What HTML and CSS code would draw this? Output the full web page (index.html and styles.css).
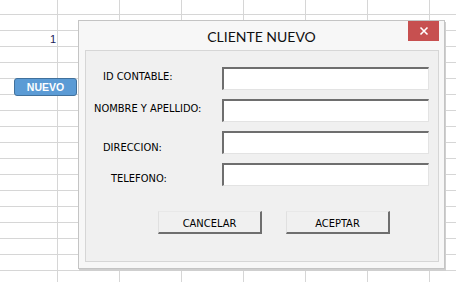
FILE: index.html
```html
<!DOCTYPE html>
<html>
<head>
<meta charset="utf-8">
<link rel="stylesheet" href="styles.css">
</head>
<body>
<div class="sheet">
  <span class="cell-value">1</span>
  <div class="nuevo-btn">NUEVO</div>

  <div class="dialog">
    <div class="titlebar">
      <span class="title">CLIENTE NUEVO</span>
      <div class="close-btn">
        <svg width="10" height="10" viewBox="0 0 10 10"><path d="M1.5 1.5 L8.5 8.5 M8.5 1.5 L1.5 8.5" stroke="#fff" stroke-width="1.6" fill="none"/></svg>
      </div>
    </div>
    <div class="panel">
      <div class="row">
        <span class="label l-id">ID CONTABLE:</span>
        <div class="input"></div>
      </div>
      <div class="row">
        <span class="label l-nombre">NOMBRE Y APELLIDO:</span>
        <div class="input"></div>
      </div>
      <div class="row">
        <span class="label l-dir">DIRECCION:</span>
        <div class="input"></div>
      </div>
      <div class="row">
        <span class="label l-tel">TELEFONO:</span>
        <div class="input"></div>
      </div>
      <div class="actions">
        <div class="btn">CANCELAR</div>
        <div class="btn">ACEPTAR</div>
      </div>
    </div>
  </div>
</div>
</body>
</html>
```

FILE: styles.css
```css
html, body {
  margin: 0;
  padding: 0;
}
body {
  width: 456px;
  height: 282px;
  overflow: hidden;
  background: #fff;
}
.sheet {
  position: relative;
  width: 456px;
  height: 282px;
  background-color: #fff;
  background-image:
    linear-gradient(to right, #d6d6d6 1px, transparent 1px),
    linear-gradient(to bottom, #d6d6d6 1px, transparent 1px);
  background-size: 62px 100%, 100% 16px;
  background-position: 57px 0, 0 14px;
}
.cell-value {
  position: absolute;
  left: 50px;
  top: 33px;
  font: 11px "Liberation Sans", Arial, sans-serif;
  color: #1b1b5a;
}
.nuevo-btn {
  position: absolute;
  left: 14px;
  top: 78px;
  width: 63px;
  height: 18px;
  box-sizing: border-box;
  background: #5b9bd5;
  border: 1px solid #41719c;
  border-radius: 3px;
  color: #fff;
  font: bold 10.5px "Liberation Sans", Arial, sans-serif;
  display: flex;
  align-items: center;
  justify-content: center;
}
.dialog {
  position: absolute;
  left: 78px;
  top: 20px;
  width: 367px;
  height: 249px;
  box-sizing: border-box;
  border: 1px solid #c4c4c4;
  background: #f7f7f7;
  box-shadow: 1px 2px 0 #cfcfcf;
  display: flex;
  flex-direction: column;
}
.titlebar {
  position: relative;
  height: 29px;
  display: flex;
  align-items: center;
  justify-content: center;
}
.title {
  font: 14px "Lato", "Liberation Sans", sans-serif;
  color: #111;
  margin-top: 1px;
}
.close-btn {
  position: absolute;
  top: 0;
  right: 5px;
  width: 31px;
  height: 20px;
  background: #c75050;
  display: flex;
  align-items: center;
  justify-content: center;
}
.close-btn svg {
  display: block;
}
.panel {
  margin: 0 5px 6px 6px;
  flex: 1;
  box-sizing: border-box;
  border: 1px solid #d6d6d6;
  background: #f0f0f0;
  padding-top: 16px;
  display: flex;
  flex-direction: column;
  gap: 9px;
}
.row {
  display: flex;
  align-items: center;
  height: 23px;
}
.label {
  width: 136px;
  font: 11px "DejaVu Sans Condensed", "DejaVu Sans", sans-serif;
  font-stretch: condensed;
  color: #000;
  box-sizing: border-box;
}
.l-id { padding-left: 17px; margin-top: -4px; }
.l-nombre { padding-left: 8px; margin-top: -4px; }
.l-dir { padding-left: 17px; margin-top: 9px; }
.l-tel { padding-left: 25px; margin-top: 7px; }
.input {
  width: 207px;
  height: 23px;
  box-sizing: border-box;
  background: #fff;
  border-top: 2px solid #6e6e6e;
  border-left: 2px solid #6e6e6e;
  border-bottom: 1px solid #e3e3e3;
  border-right: 1px solid #e3e3e3;
}
.actions {
  display: flex;
  gap: 24px;
  padding-left: 72px;
  margin-top: 16px;
}
.btn {
  width: 104px;
  height: 23px;
  box-sizing: border-box;
  background: #f0f0f0;
  border-top: 1px solid #e8e8e8;
  border-left: 1px solid #e0e0e0;
  border-bottom: 2px solid #6e6e6e;
  border-right: 2px solid #6e6e6e;
  display: flex;
  align-items: center;
  justify-content: center;
  padding-top: 3px;
  font: 11px "DejaVu Sans Condensed", "DejaVu Sans", sans-serif;
  font-stretch: condensed;
  color: #000;
}
```
